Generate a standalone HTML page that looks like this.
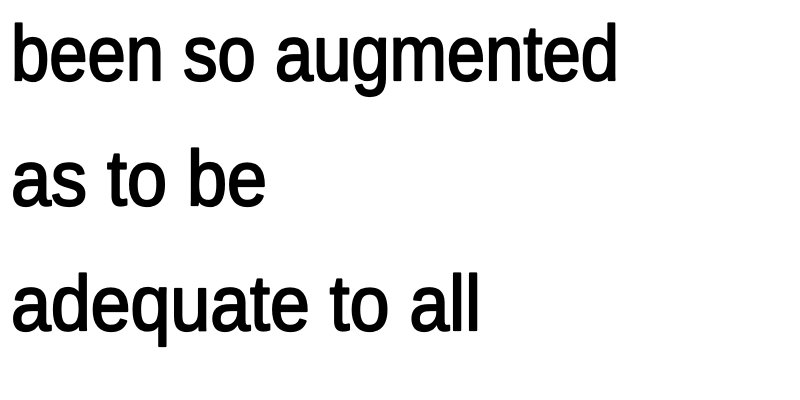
<!DOCTYPE html>
<html><head><meta charset="utf-8"><style>html,body{margin:0;padding:0;background:#fff;width:800px;height:400px;overflow:hidden}</style></head>
<body>
<svg width="800" height="400" xmlns="http://www.w3.org/2000/svg" style="display:block">
<g font-family="'Comic Sans MS','Liberation Sans',sans-serif" font-size="78" fill="#000" stroke="#000" stroke-width="2.2" stroke-linejoin="round">
<text x="11" y="80" textLength="608" lengthAdjust="spacingAndGlyphs">been so augmented</text>
<text x="11" y="205" textLength="256" lengthAdjust="spacingAndGlyphs">as to be</text>
<text x="11" y="330" textLength="470" lengthAdjust="spacingAndGlyphs">adequate to all</text>
</g>
</svg>
</body></html>
